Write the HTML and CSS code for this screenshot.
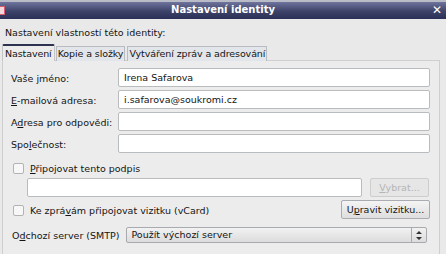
FILE: index.html
```html
<!DOCTYPE html>
<html lang="cs">
<head>
  <meta charset="UTF-8">
  <title>Nastavení identity</title>
  <link rel="stylesheet" href="styles.css">
</head>
<body>
  <div class="topstrip"></div>
  <div class="titlebar">
    <span class="app-icon"></span>
    <span class="title">Nastavení identity</span>
    <span class="close">&#x2715;</span>
  </div>

  <div class="dialog">
    <p class="intro">Nastavení vlastností této identity:</p>

    <div class="tabs">
      <div class="tab active">Nastavení</div>
      <div class="tab">Kopie a složky</div>
      <div class="tab">Vytváření zpráv a adresování</div>
    </div>

    <div class="panel">
      <div class="fields">
        <label>Vaše <u>j</u>méno:</label>
        <div class="input">Irena Safarova</div>
        <label><u>E</u>-mailová adresa:</label>
        <div class="input">i.safarova@soukromi.cz</div>
        <label>A<u>d</u>resa pro odpovědi:</label>
        <div class="input"></div>
        <label>Spo<u>l</u>ečnost:</label>
        <div class="input"></div>
      </div>

      <div class="check-row">
        <span class="checkbox"></span>
        <span><u>P</u>řipojovat tento podpis</span>
      </div>
      <div class="sig-row">
        <div class="input sig"></div>
        <button class="btn disabled"><u>V</u>ybrat...</button>
      </div>
      <div class="vcard-row">
        <div class="check-row inline">
          <span class="checkbox"></span>
          <span>Ke zprá<u>v</u>ám připojovat vizitku (vCard)</span>
        </div>
        <button class="btn">U<u>p</u>ravit vizitku...</button>
      </div>
      <div class="smtp-row">
        <span>O<u>d</u>chozí server (SMTP)</span>
        <div class="select">
          <span class="select-text">Použít výchozí server</span>
          <span class="select-arrows">
            <svg width="6" height="9" viewBox="0 0 6 9"><path d="M3 0L6 3H0Z M3 9L0 6H6Z" fill="#333"/></svg>
          </span>
        </div>
      </div>
    </div>
  </div>
</body>
</html>
```

FILE: styles.css
```css
* {
  margin: 0;
  padding: 0;
  box-sizing: border-box;
}

body {
  font-family: 'DejaVu Sans', sans-serif;
  font-size: 9.5px;
  color: #141414;
  background: #e9e9e9;
  width: 446px;
  height: 254px;
  overflow: hidden;
}

u {
  text-decoration: underline;
  text-underline-offset: 1px;
}

.topstrip {
  height: 2px;
  background: #b9bbc6;
}

.titlebar {
  height: 17px;
  display: flex;
  align-items: center;
  justify-content: center;
  position: relative;
  background: linear-gradient(#6f749c, #3c4268 55%, #2b3156);
  color: #fff;
}

.title {
  font-weight: bold;
  font-size: 10px;
  margin-bottom: 2px;
}

.app-icon {
  position: absolute;
  left: -3px;
  top: 4px;
  width: 8px;
  height: 9px;
  background: #f2d6dc;
  border: 1px solid #d45a6c;
}

.close {
  position: absolute;
  right: 4px;
  top: 1px;
  font-size: 12px;
  font-weight: bold;
}

.dialog {
  padding: 6px 6px 0 2px;
}

.intro {
  padding-left: 3px;
  height: 19px;
  line-height: 15px;
}

.tabs {
  display: flex;
  gap: 2px;
  height: 17px;
  align-items: flex-end;
}

.tab {
  height: 15px;
  padding: 0 1px;
  line-height: 14px;
  background: #e2e6ea;
  border: 1px solid #b8bcc2;
  border-bottom: none;
  letter-spacing: -0.1px;
}

.tab.active {
  height: 17px;
  padding: 0 2px;
  line-height: 15px;
  background: #ececec;
  border: 1px solid #c4c4c4;
  border-top: 2px solid #2c3250;
  border-bottom: none;
  border-radius: 2px 2px 0 0;
  margin-right: -1px;
  position: relative;
  z-index: 1;
}

.panel {
  height: 200px;
  background: #ececec;
  border: 1px solid #cfcfcf;
  border-bottom: none;
  margin-top: -1px;
  padding: 7px 9px 0 8px;
}

.fields {
  display: grid;
  grid-template-columns: 107px 312px;
  row-gap: 3px;
  align-items: center;
}

.fields label {
  padding-top: 1px;
}

.input {
  height: 19px;
  background: #fff;
  border: 1px solid #b9bcbf;
  border-radius: 2px;
  padding: 0 5px;
  line-height: 17px;
}

.check-row {
  display: flex;
  align-items: center;
  gap: 6px;
  margin: 9px 0 0 2px;
  height: 12px;
}

.checkbox {
  width: 11px;
  height: 11px;
  background: #f7f7f7;
  border: 1px solid #b3b3b3;
  border-radius: 2px;
}

.sig-row {
  display: flex;
  align-items: center;
  gap: 8px;
  margin: 4px 0 0 16px;
}

.sig {
  width: 335px;
}

.btn {
  font-family: inherit;
  font-size: 9.5px;
  height: 19px;
  padding: 0 3px;
  white-space: nowrap;
  background: linear-gradient(#f4f4f4, #dedede);
  border: 1px solid #a9acb0;
  border-radius: 2px;
  color: #141414;
}

.btn.disabled {
  width: 59px;
  margin-top: -1px;
  color: #b5b5b5;
  background: #e6e6e6;
  border-color: #cdcdcd;
}

.vcard-row {
  display: flex;
  align-items: center;
  justify-content: space-between;
  margin-top: 3px;
  width: 419px;
}

.vcard-row .check-row {
  margin-top: 1px;
}

.vcard-row .btn {
  width: 89px;
}

.smtp-row {
  display: flex;
  align-items: center;
  gap: 7px;
  margin-top: 8px;
  padding-left: 1px;
}

.select {
  width: 301px;
  height: 16px;
  display: flex;
  background: linear-gradient(#f2f2f2, #dcdcdc);
  border: 1px solid #a7aaae;
  border-radius: 2px;
}

.select-text {
  flex: 1;
  padding-left: 4px;
  line-height: 14px;
  border-right: 1px solid #a7aaae;
}

.select-arrows {
  width: 14px;
  display: flex;
  align-items: center;
  justify-content: center;
}
```
